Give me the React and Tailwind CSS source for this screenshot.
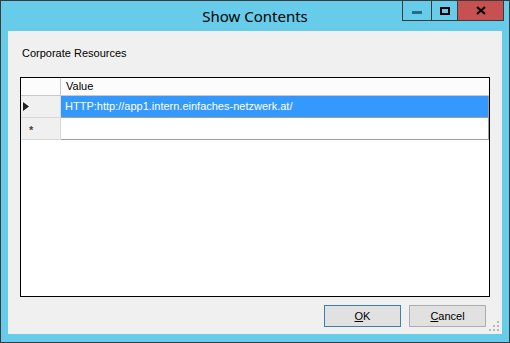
export default function App() {
  const ui = { fontFamily: '"Liberation Sans", Arial, sans-serif' };
  return (
    <div className="w-[510px] h-[343px] bg-[#3b3b3b] p-px overflow-hidden">
      <div className="w-full h-full bg-[#67cbea] flex flex-col">
        {/* Title bar */}
        <div className="relative h-[30px] shrink-0">
          <div
            className="absolute left-0 right-0 top-[4px] text-center text-[15px] text-black"
            style={{ fontFamily: '"Noto Sans", "Open Sans", sans-serif' }}
          >
            Show Contents
          </div>
          <div className="absolute top-[-1px] right-[5px] flex h-[21px]">
            <div className="w-[29px] h-full border border-[#3b3b3b] border-r-0 flex items-center justify-center">
              <div className="w-[10px] h-[3px] bg-[#2c6a85] mt-[4px]" />
            </div>
            <div className="w-[26px] h-full border border-[#3b3b3b] border-r-0 flex items-center justify-center">
              <div className="w-[10px] h-[8px] border-2 border-black" />
            </div>
            <div className="w-[47px] h-full border border-[#3b3b3b] bg-[#c75050] flex items-center justify-center">
              <svg width="10" height="9" viewBox="0 0 10 9">
                <path d="M1 1 L9 8 M9 1 L1 8" stroke="black" strokeWidth="2.2" />
              </svg>
            </div>
          </div>
        </div>
        {/* Client */}
        <div className="mx-[7px] h-[303px] bg-[#f0f0f0] relative flex flex-col" style={ui}>
          <div className="pl-[14px] pt-[16px] h-[46px] text-[11px] text-black leading-[13px]">
            Corporate Resources
          </div>
          <div className="ml-[12px] w-[470px] h-[220px] border border-black bg-[#f0f0f0] flex flex-col">
            {/* header */}
            <div className="flex h-[18px] bg-[#fcfcfc] border-b border-[#c8c8c8]">
              <div className="w-[40px] border-r border-[#c8c8c8]" />
              <div className="flex-1 pl-[5px] text-[11px] leading-[17px]">Value</div>
            </div>
            {/* row 1 */}
            <div className="flex h-[22px]">
              <div className="w-[40px] bg-[#f0f0f0] border-r border-b border-[#d8d8d8] flex items-center pl-[2px]">
                <svg width="6" height="9" viewBox="0 0 6 9">
                  <path d="M0 0 L6 4.5 L0 9 Z" fill="#222" />
                </svg>
              </div>
              <div className="flex-1 bg-[#3399ff] text-white text-[11px] leading-[21px] pl-[4px] border-b border-r border-[#a0a0a0]">
                HTTP:http://app1.intern.einfaches-netzwerk.at/
              </div>
            </div>
            {/* row 2 */}
            <div className="flex h-[22px]">
              <div className="w-[40px] bg-[#f0f0f0] border-r border-b border-[#d8d8d8] flex items-center pl-[8px]">
                <span className="text-[11px] font-bold leading-none text-[#444] mt-[4px]">*</span>
              </div>
              <div className="flex-1 bg-white border-b border-r border-[#a0a0a0]" />
            </div>
            <div className="flex-1 bg-[#ffffff]" />
          </div>
          <div className="flex justify-end gap-[8px] pr-[16px] mt-[8px]">
            <button className="w-[77px] h-[22px] bg-[#e1e1e1] border border-[#3c7fb1] text-[11px] text-black">
              <span className="underline">O</span>K
            </button>
            <button className="w-[77px] h-[22px] bg-[#e1e1e1] border border-[#adadad] text-[11px] text-black">
              <span className="underline">C</span>ancel
            </button>
          </div>
          <svg className="absolute right-[2px] bottom-[2px]" width="11" height="11" viewBox="0 0 11 11">
            {[[8, 0], [8, 4], [4, 4], [8, 8], [4, 8], [0, 8]].map(([x, y], i) => (
              <rect key={i} x={x} y={y} width="2" height="2" fill="#b8b8b8" />
            ))}
          </svg>
        </div>
      </div>
    </div>
  );
}
